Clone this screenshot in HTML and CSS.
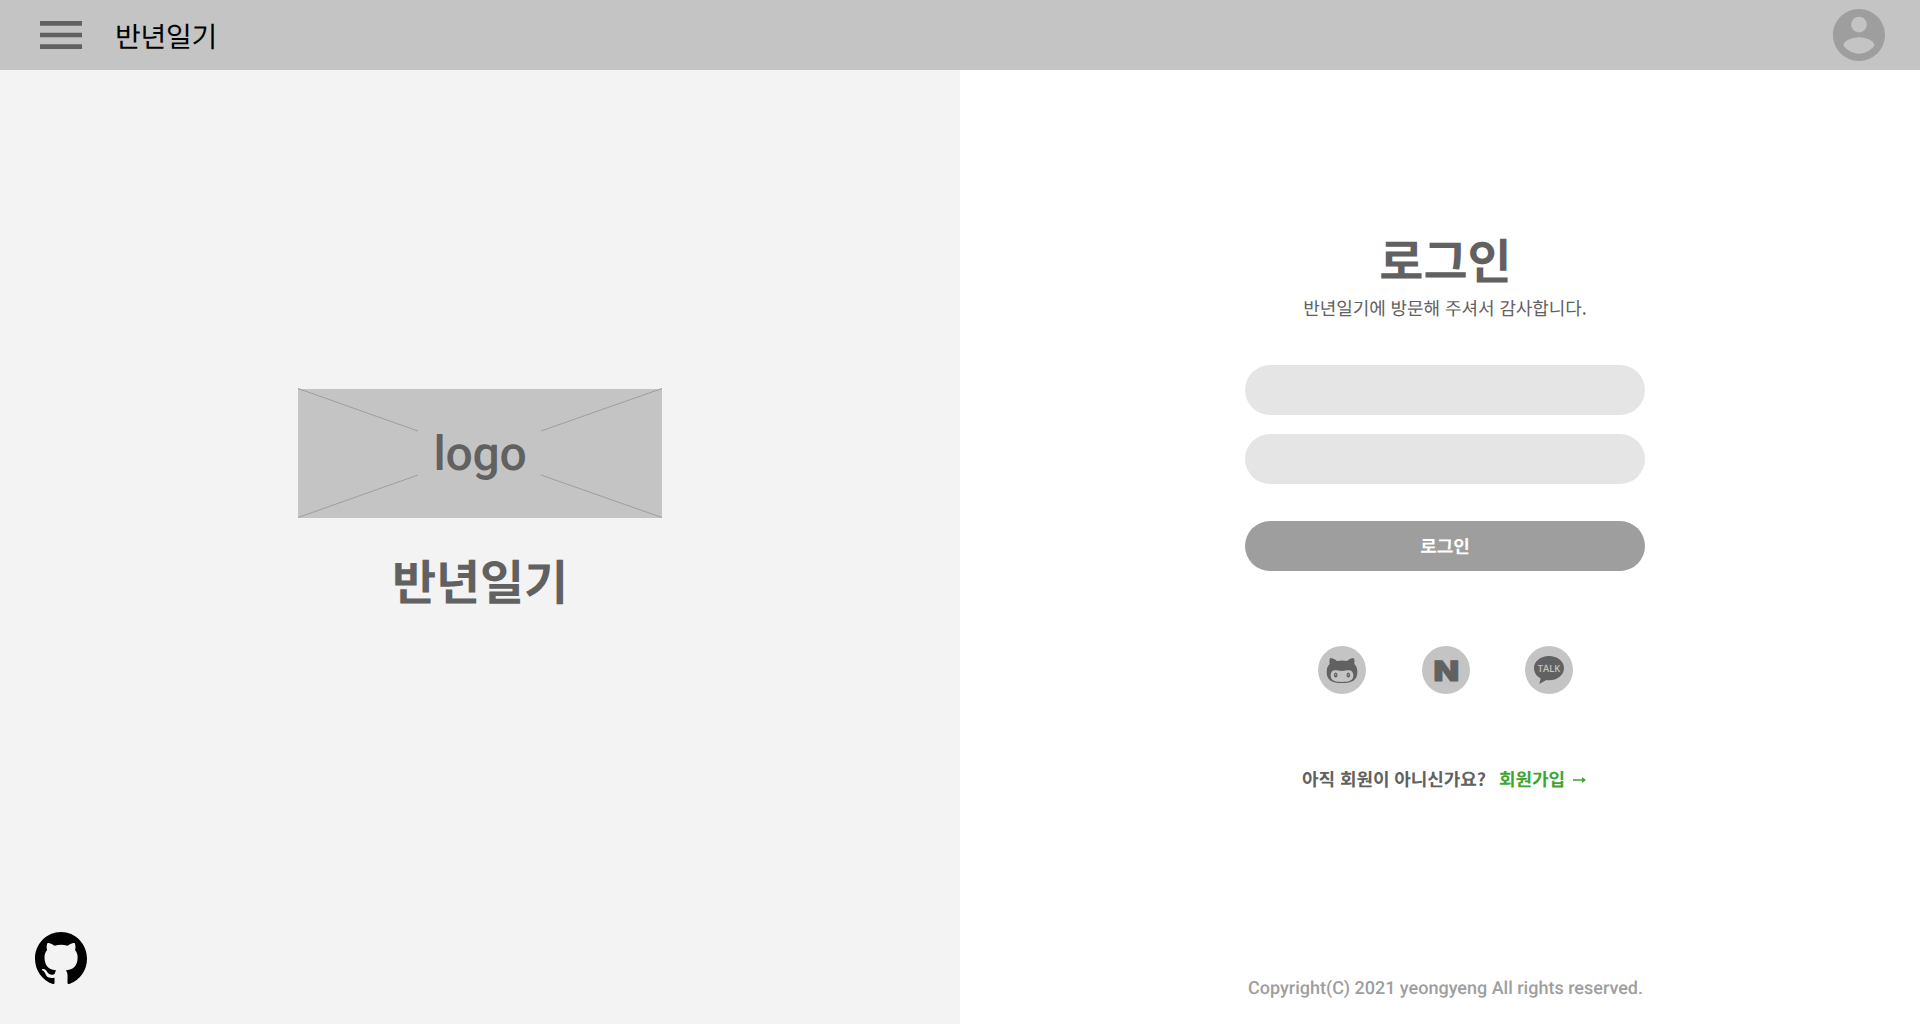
FILE: index.html
```html
<!DOCTYPE html>
<html lang="ko">
<head>
<meta charset="utf-8">
<title>반년일기</title>
<link rel="stylesheet" href="styles.css">
</head>
<body>
<header class="topbar">
  <button class="icon-button" aria-label="메뉴">
    <svg class="menu-icon" viewBox="3 6 18 12"><path d="M3 18h18v-2H3v2zm0-5h18v-2H3v2zm0-7v2h18V6H3z"/></svg>
  </button>
  <span class="brand">반년일기</span>
  <button class="icon-button account" aria-label="계정">
    <svg class="account-icon" viewBox="2 2 20 20"><path d="M12 2C6.48 2 2 6.48 2 12s4.480 10 10 10 10-4.480 10-10S17.520 2 12 2zm0 3c1.660 0 3 1.340 3 3s-1.340 3-3 3-3-1.340-3-3 1.340-3 3-3zm0 14.200c-2.500 0-4.710-1.280-6-3.220.030-1.990 4-3.080 6-3.080 1.990 0 5.970 1.090 6 3.080-1.290 1.940-3.500 3.220-6 3.220z"/></svg>
  </button>
</header>
<main class="page">
  <section class="intro">
    <div class="intro-body">
      <div class="logo">
        <svg class="logo-lines" viewBox="0 0 364 129"><path d="M0 -.5L120 42M364 -.5L243 42M0 128.500L120 86M364 128.500L243 86"/></svg>
        <span class="logo-text">logo</span>
      </div>
      <h1 class="intro-title">반년일기</h1>
    </div>
    <a class="github-link" href="#" aria-label="GitHub">
      <svg class="github-icon" viewBox="0 0 16 15.600" preserveAspectRatio="none"><path d="M8 0C3.580 0 0 3.580 0 8c0 3.540 2.290 6.530 5.470 7.590.400.070.550-.170.550-.380 0-.190-.010-.820-.010-1.490-2.010.370-2.530-.490-2.690-.940-.090-.230-.480-.940-.820-1.130-.280-.150-.680-.520-.010-.530.630-.010 1.080.580 1.230.820.720 1.210 1.870.870 2.330.660.070-.520.280-.870.510-1.070-1.780-.200-3.640-.890-3.640-3.950 0-.870.310-1.590.820-2.150-.080-.200-.360-1.020.080-2.120 0 0 .670-.210 2.200.820.640-.180 1.320-.270 2-.270s1.360.090 2 .270c1.530-1.040 2.200-.820 2.200-.820.440 1.100.160 1.920.080 2.120.510.560.820 1.270.820 2.150 0 3.070-1.870 3.750-3.650 3.950.290.250.540.730.540 1.480 0 1.070-.010 1.930-.010 2.200 0 .210.150.460.550.380A8.010 8.010 0 0 0 16 8c0-4.420-3.580-8-8-8z"/></svg>
    </a>
  </section>
  <section class="login">
    <div class="login-body">
      <h2 class="login-title">로그인</h2>
      <p class="login-sub">반년일기에 방문해 주셔서 감사합니다.</p>
      <form class="login-form">
        <input class="field" type="text" aria-label="아이디">
        <input class="field" type="password" aria-label="비밀번호">
        <button class="submit" type="button">로그인</button>
      </form>
      <div class="socials">
        <a class="social" href="#" aria-label="GitHub">
          <svg viewBox="0 0 144 144"><path class="mark" fill-rule="evenodd" d="M36 36C43 36 51 40 57 45Q72 42 87 45C93 40 101 36 107 36Q111 44 109 54Q118 62 118 77C118 101 105 111 72 111S26 101 26 77Q26 62 35 54Q33 44 36 36ZM51 73C43 73 38 79 38 88C38 104 50 108 72 108S106 104 106 88C106 79 101 73 93 73C86 73 80 75 72 75S58 73 51 73Z"/><ellipse class="mark" cx="53" cy="87" rx="5.500" ry="7.500"/><ellipse class="mark" cx="91" cy="87" rx="5.500" ry="7.500"/><circle class="glint" cx="53" cy="86" r="2"/><circle class="glint" cx="91" cy="86" r="2"/></svg>
        </a>
        <a class="social" href="#" aria-label="Naver">
          <svg viewBox="0 0 48 48"><text class="naver" x="11.500" y="34.600" textLength="25.700" lengthAdjust="spacingAndGlyphs">N</text></svg>
        </a>
        <a class="social" href="#" aria-label="Kakao">
          <svg viewBox="0 0 144 144"><path class="mark" d="M72 30C47 30 27 45 27 66C27 80 35 91 47 97L43 114L64 102Q68 103 72 103C97 103 117 87 117 66S97 30 72 30Z"/><text class="talk" x="38.500" y="77.500" textLength="67" lengthAdjust="spacingAndGlyphs">TALK</text></svg>
        </a>
      </div>
      <p class="signup"><span>아직 회원이 아니신가요?</span><a class="signup-link" href="#">회원가입<svg class="arrow" viewBox="0 0 13 6"><path d="M0 2.300H9V0L13 3L9 6V3.700H0Z"/></svg></a></p>
    </div>
    <footer class="copyright">Copyright(C) 2021 yeongyeng All rights reserved.</footer>
  </section>
</main>
</body>
</html>
```
FILE: styles.css
```css
* {
  box-sizing: border-box;
}

body {
  margin: 0;
  height: 100vh;
  display: flex;
  flex-direction: column;
  overflow: hidden;
  font-family: "Noto Sans CJK KR", sans-serif;
  text-rendering: geometricPrecision;
  -webkit-font-smoothing: antialiased;
  color: #616161;
  background: #fff;
}

h1, h2, p {
  margin: 0;
}

a {
  color: inherit;
  text-decoration: none;
}

svg {
  display: block;
}

.topbar {
  flex: none;
  height: 70px;
  padding: 0 35px 0 40px;
  display: flex;
  align-items: center;
  background: #c4c4c4;
}

.icon-button {
  padding: 0;
  border: 0;
  background: none;
}

.account {
  margin-left: auto;
}

.menu-icon {
  width: 42px;
  height: 28px;
  fill: #616161;
}

.account-icon {
  width: 52px;
  height: 52px;
  fill: #9e9e9e;
}

.brand {
  margin-left: 33px;
  padding-top: 3px;
  font-size: 28px;
  line-height: 41px;
  letter-spacing: -.25px;
  color: #000;
}

.page {
  flex: 1;
  display: grid;
  grid-template-columns: 1fr 1fr;
}

.intro {
  display: flex;
  flex-direction: column;
  justify-content: space-between;
  padding: 319px 35px 40px;
  background: #f3f3f3;
}

.intro-body {
  display: flex;
  flex-direction: column;
  align-items: center;
}

.logo {
  width: 364px;
  height: 129px;
  display: grid;
  place-items: center;
  background: #c4c4c4;
}

.logo-lines,
.logo-text {
  grid-area: 1 / 1;
}

.logo-lines {
  width: 364px;
  height: 129px;
  overflow: visible;
  fill: none;
  stroke: #9e9e9e;
}

.logo-text {
  padding-top: 1px;
  font: 500 48px/56px Roboto, sans-serif;
  letter-spacing: -.2px;
}

.intro-title {
  margin-top: 26px;
  font-size: 48px;
  line-height: 70px;
  letter-spacing: -.2px;
}

.github-link {
  width: 52px;
}

.github-icon {
  width: 52px;
  height: 52px;
  fill: #000;
}

.login {
  display: flex;
  flex-direction: column;
  align-items: center;
  justify-content: space-between;
  padding: 153px 0 24px 10px;
}

.login-body {
  width: 400px;
  display: flex;
  flex-direction: column;
  align-items: center;
}

.login-title {
  padding-left: 1px;
  font-size: 48px;
  line-height: 70px;
}

.login-sub {
  margin-top: 2px;
  font-size: 18px;
  line-height: 26px;
  letter-spacing: -.08px;
}

.login-form {
  width: 100%;
  margin-top: 44px;
  display: flex;
  flex-direction: column;
}

.field,
.submit {
  height: 50px;
  padding: 0 24px;
  border: 0;
  border-radius: 25px;
  font-family: inherit;
  font-size: 18px;
}

.field {
  margin-bottom: 19px;
  background: #e5e5e5;
}

.submit {
  margin-top: 18px;
  background: #9e9e9e;
  color: #fff;
  font-weight: 700;
  text-rendering: inherit;
}

.socials {
  width: 256px;
  margin-top: 75px;
  padding-left: 1px;
  display: flex;
  justify-content: space-between;
}

.social {
  width: 48px;
  height: 48px;
  border-radius: 50%;
  background: #c4c4c4;
}

.mark {
  fill: #616161;
}

.glint {
  fill: #c4c4c4;
}

.naver {
  font: 900 28px Inter, sans-serif;
  fill: #616161;
  stroke: #616161;
  stroke-width: .9px;
}

.talk {
  font: 600 30px "Open Sans", sans-serif;
  fill: #c4c4c4;
}

.signup {
  margin-top: 72px;
  padding-right: 2px;
  display: flex;
  gap: 13px;
  font-size: 18px;
  font-weight: 700;
  line-height: 26px;
  letter-spacing: -.06px;
}

.signup-link {
  display: flex;
  align-items: center;
  gap: 8px;
  color: #3ea52e;
}

.arrow {
  width: 13px;
  height: 6px;
  margin-top: 2px;
  fill: currentColor;
}

.copyright {
  padding-left: 1px;
  font: 500 18px/22px Roboto, sans-serif;
  color: #9e9e9e;
}
```
